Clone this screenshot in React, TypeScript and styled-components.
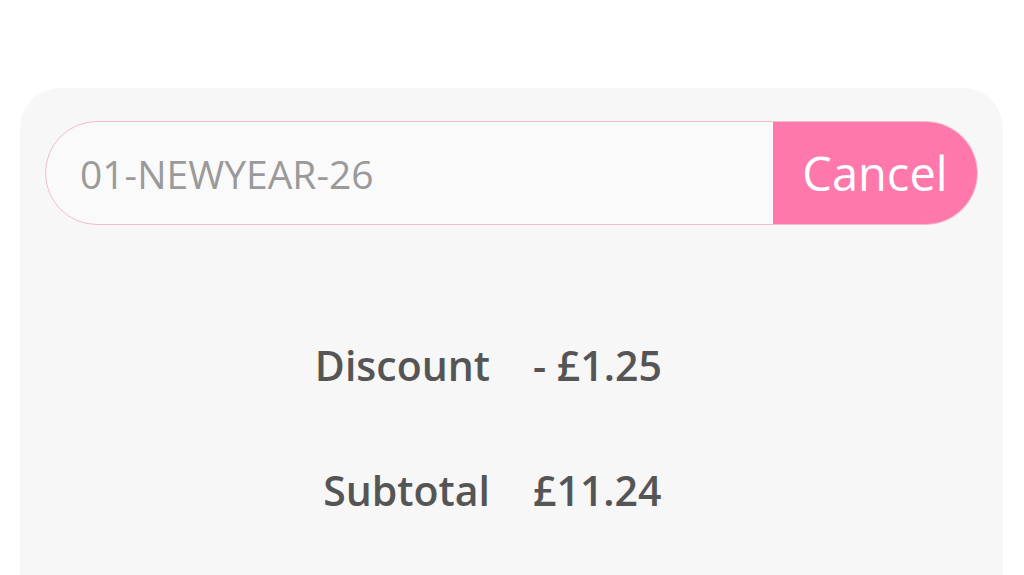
import React from 'react';
import styled, { createGlobalStyle } from 'styled-components';

const GlobalStyle = createGlobalStyle`
  html, body {
    margin: 0;
    padding: 0;
    background: #ffffff;
    font-family: "Open Sans", "Noto Sans", sans-serif;
  }
`;

const Panel = styled.div`
  margin: 88px 21px 0 20px;
  min-height: 487px;
  box-sizing: border-box;
  padding: 33px 25px 0 25px;
  background: #f7f7f7;
  border-radius: 40px 40px 0 0;
`;

const CouponBar = styled.form`
  display: flex;
  height: 104px;
  box-sizing: border-box;
  border: 1.5px solid #f2bccd;
  border-radius: 52px;
  background: #fafafa;
  overflow: hidden;
`;

const CouponInput = styled.input`
  flex: 1;
  min-width: 0;
  border: none;
  outline: none;
  background: transparent;
  padding: 0 0 0 34px;
  font-family: inherit;
  font-size: 39px;
  color: #9a9a9a;

  &::placeholder {
    color: #9a9a9a;
  }
`;

const CancelButton = styled.button`
  width: 204px;
  border: none;
  background: #fe78ab;
  color: #ffffff;
  font-family: inherit;
  font-size: 47px;
  padding: 0;
  cursor: pointer;
`;

const Summary = styled.dl`
  display: grid;
  grid-template-columns: 1fr 1fr;
  column-gap: 43px;
  row-gap: 71px;
  margin: 113px 0 0 0;
  color: #555555;
  font-size: 41px;
  font-weight: 600;
  line-height: 54px;
`;

const Label = styled.dt`
  text-align: right;
`;

const Value = styled.dd`
  margin: 0;
  text-align: left;
`;

const rows = [
  { label: 'Discount', value: '- £1.25' },
  { label: 'Subtotal', value: '£11.24' },
];

const App: React.FC = () => {
  return (
    <>
      <GlobalStyle />
      <Panel>
        <CouponBar onSubmit={(e) => e.preventDefault()}>
          <CouponInput placeholder="01-NEWYEAR-26" />
          <CancelButton type="button">Cancel</CancelButton>
        </CouponBar>
        <Summary>
          {rows.map((r) => (
            <React.Fragment key={r.label}>
              <Label>{r.label}</Label>
              <Value>{r.value}</Value>
            </React.Fragment>
          ))}
        </Summary>
      </Panel>
    </>
  );
};

export default App;
